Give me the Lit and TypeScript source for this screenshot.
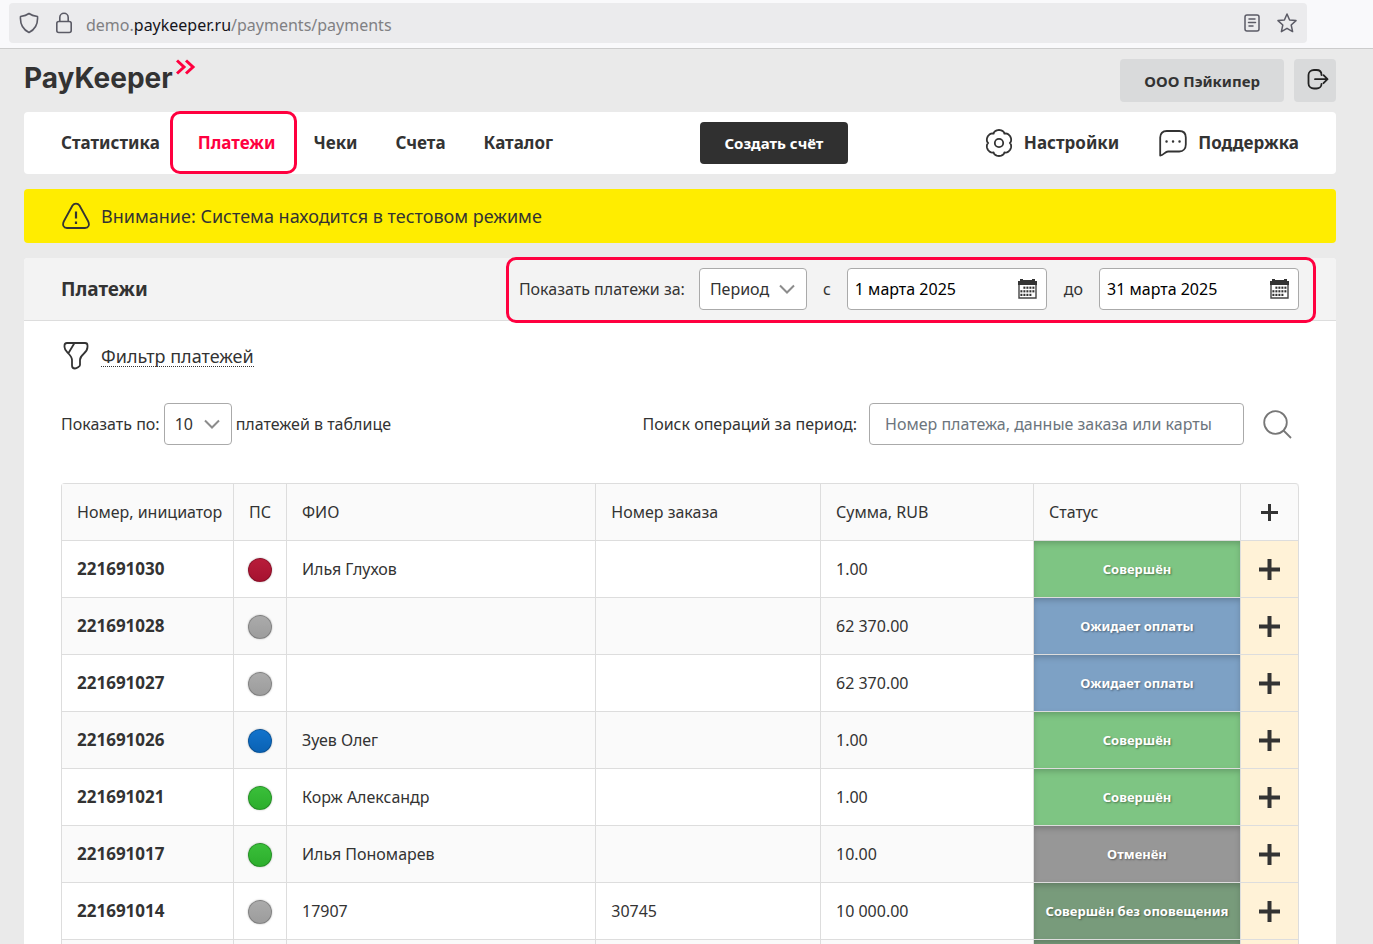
import { LitElement, html, css, svg, nothing } from "lit";
import { customElement } from "lit/decorators.js";
import { classMap } from "lit/directives/class-map.js";

type Dot = "red" | "gray" | "blue" | "green";
type Status = "done" | "wait" | "cancel" | "silent";

interface Payment {
  id: string;
  dot: Dot;
  name: string;
  order: string;
  sum: string;
  status: Status;
}

const STATUS_TEXT: Record<Status, string> = {
  done: "Совершён",
  wait: "Ожидает оплаты",
  cancel: "Отменён",
  silent: "Совершён без оповещения",
};

const PAYMENTS: Payment[] = [
  { id: "221691030", dot: "red", name: "Илья Глухов", order: "", sum: "1.00", status: "done" },
  { id: "221691028", dot: "gray", name: "", order: "", sum: "62 370.00", status: "wait" },
  { id: "221691027", dot: "gray", name: "", order: "", sum: "62 370.00", status: "wait" },
  { id: "221691026", dot: "blue", name: "Зуев Олег", order: "", sum: "1.00", status: "done" },
  { id: "221691021", dot: "green", name: "Корж Александр", order: "", sum: "1.00", status: "done" },
  { id: "221691017", dot: "green", name: "Илья Пономарев", order: "", sum: "10.00", status: "cancel" },
  { id: "221691014", dot: "gray", name: "17907", order: "30745", sum: "10 000.00", status: "silent" },
];

// Six-lobed outline of the settings gear, centred on 14,14.
const gearPath = (() => {
  const points: string[] = [];
  for (let deg = 0; deg < 360; deg += 5) {
    const t = (deg * Math.PI) / 180;
    const r = 10.8 + 2.2 * Math.pow(Math.abs(Math.cos(3 * (t - Math.PI / 2))), 0.6);
    points.push(`${(14 + r * Math.cos(t)).toFixed(2)} ${(14 + r * Math.sin(t)).toFixed(2)}`);
  }
  return `M${points.join("L")}Z`;
})();

const chevron = html`<svg class="chevron" width="16" height="10" viewBox="0 0 16 10" aria-hidden="true">
  <path d="M1 1.5l7 7 7-7" fill="none" stroke="#8c8c8c" stroke-width="2" />
</svg>`;

const calendarCells = [
  [6, 9, 12, 15],
  [3, 6, 9, 12, 15],
  [3, 6, 9, 12],
];

const calendar = html`<svg width="19" height="20" viewBox="0 0 19 20" aria-hidden="true">
  <path d="M1 4V19H18V4" fill="none" stroke="#444" stroke-width="1.4" />
  <path d="M0 2H2V0H5V1H14V0H17V2H19V6H0Z" fill="#333" />
  ${calendarCells.map((row, y) =>
    row.map((x) => svg`<rect x=${x - 0.6} y=${7.6 + y * 3.6} width="2" height="2.2" fill="#333"></rect>`)
  )}
</svg>`;

@customElement("app-root")
export class AppRoot extends LitElement {
  static styles = css`
    :host {
      display: flex;
      flex-direction: column;
      height: 100vh;
      overflow: hidden;
      background: #eaeaea;
      color: #333;
      font-family: "Noto Sans", "Open Sans", sans-serif;
      font-size: 16px;
      line-height: 24px;
    }
    * {
      box-sizing: border-box;
    }
    a {
      color: inherit;
      text-decoration: none;
    }
    button,
    input,
    select {
      font: inherit;
      color: inherit;
      margin: 0;
      padding: 0;
      border: 0;
      background: none;
    }
    svg {
      display: block;
      flex: none;
    }
    .browser {
      flex: none;
      height: 49px;
      padding: 3px 66px 5px 9px;
      background: #f9f9fb;
      border-bottom: 1px solid #ccc;
    }
    .address {
      display: flex;
      align-items: center;
      height: 40px;
      padding: 0 10px;
      border-radius: 4px;
      background: #ebebed;
    }
    .lock {
      margin: 0 13px 0 16px;
    }
    .url {
      flex: 1;
      display: flex;
      color: #808083;
      padding-top: 3px;
    }
    .url b {
      font-weight: 400;
      color: #15141a;
    }
    .star {
      margin-left: 17px;
    }
    .page {
      flex: 1;
      min-height: 0;
      overflow: auto;
      scrollbar-width: none;
      padding: 10px 37px 0 24px;
    }
    .top {
      display: flex;
      align-items: flex-start;
      gap: 10px;
      height: 53px;
    }
    .logo {
      flex: 1;
      display: flex;
      gap: 3px;
      font: 700 28px/38px "Inter", sans-serif;
      color: #333;
    }
    .gray-button {
      display: flex;
      align-items: center;
      justify-content: center;
      height: 43px;
      padding: 0 24px;
      border-radius: 4px;
      background: #d9dadb;
      font-weight: 700;
      font-size: 15px;
    }
    .exit {
      width: 42px;
      padding: 0 0 2px 5px;
    }
    .nav {
      display: flex;
      align-items: center;
      justify-content: space-between;
      height: 62px;
      padding: 0 37px;
      border-radius: 4px;
      background: #fff;
      font-size: 17px;
      font-weight: 700;
    }
    .links {
      display: flex;
      gap: 38px;
    }
    .link {
      position: relative;
    }
    .current {
      color: #ff003f;
    }
    .marked::after {
      content: "";
      position: absolute;
      inset: -20px -22px -19px -28px;
      border: 3px solid #ff003f;
      border-radius: 10px;
      pointer-events: none;
    }
    .create {
      width: 148px;
      height: 42px;
      margin-left: 10px;
      border-radius: 4px;
      background: #303030;
      color: #fff;
      font-size: 15px;
      font-weight: 700;
    }
    .tools {
      display: flex;
      gap: 40px;
    }
    .tool {
      display: flex;
      align-items: center;
      gap: 11px;
    }
    .alert {
      display: flex;
      align-items: center;
      gap: 11px;
      height: 54px;
      margin: 15px 0;
      padding: 0 38px;
      border-radius: 4px;
      background: #ffed00;
      font-size: 18px;
    }
    .panel {
      border-radius: 4px 4px 0 0;
      background: #fff;
    }
    .panel-head {
      display: flex;
      align-items: center;
      justify-content: space-between;
      height: 63px;
      padding: 0 37px;
      border-bottom: 1px solid #ddd;
      border-radius: 4px 4px 0 0;
      background: #f3f3f3;
    }
    h1 {
      margin: 0;
      font-size: 19px;
    }
    .period {
      position: relative;
      display: flex;
      align-items: center;
    }
    .period.marked::after {
      inset: -11px -17px -13px -13px;
    }
    .box {
      display: grid;
      align-items: center;
      height: 42px;
      border: 1px solid #aaa;
      border-radius: 4px;
      background: #fff;
    }
    .select select {
      grid-area: 1 / 1;
      width: 100%;
      height: 40px;
      padding: 0 10px;
      appearance: none;
    }
    .chevron {
      grid-area: 1 / 1;
      justify-self: end;
      margin-right: 11px;
      pointer-events: none;
    }
    .mode {
      width: 108px;
      margin: 0 16px 0 14px;
    }
    .date {
      grid-template-columns: 1fr auto;
      width: 200px;
      padding: 0 9px 0 7px;
      margin-left: 16px;
      color: #000;
    }
    .date input {
      min-width: 0;
      width: 100%;
    }
    .till {
      margin-left: 17px;
    }
    .body {
      padding: 20px 37px 0;
    }
    .filter {
      display: flex;
      align-items: center;
      gap: 12px;
      padding-left: 2px;
      font-size: 18px;
    }
    .filter span {
      border-bottom: 1px dotted #333;
      line-height: 20px;
    }
    .controls {
      display: flex;
      align-items: center;
      margin: 32px 0 38px;
    }
    .count {
      width: 68px;
      margin: 0 4px;
    }
    .search-label {
      margin-left: auto;
    }
    .search {
      width: 375px;
      margin: 0 19px 0 12px;
      padding: 0 15px;
    }
    .search::placeholder {
      color: #6c757d;
      opacity: 1;
    }
    .find {
      margin-right: 7px;
    }
    table {
      width: 100%;
      table-layout: fixed;
      border-collapse: separate;
      border-spacing: 0;
      border: solid #ddd;
      border-width: 1px 0 0 1px;
      border-radius: 4px 4px 0 0;
    }
    .col-id {
      width: 172px;
    }
    .col-ps {
      width: 53px;
    }
    .col-name {
      width: 25%;
    }
    .col-sum {
      width: 213px;
    }
    .col-status {
      width: 207px;
    }
    .col-more {
      width: 58px;
    }
    th,
    td {
      height: 57px;
      padding: 0 15px;
      border: solid #ddd;
      border-width: 0 1px 1px 0;
      text-align: left;
      font-weight: 400;
      white-space: nowrap;
    }
    thead th {
      background: #fafafa;
    }
    thead th:last-child {
      border-top-right-radius: 4px;
    }
    tbody tr:nth-child(even) {
      background: #fafafa;
    }
    tbody th {
      font-size: 17px;
      font-weight: 700;
    }
    .center,
    tbody .status {
      padding: 0;
      text-align: center;
    }
    .dot {
      display: block;
      width: 24px;
      height: 24px;
      margin: 2px auto 0;
      border: 1px solid rgba(0, 0, 0, 0.2);
      border-radius: 50%;
      box-shadow: 0 0 2px rgba(0, 0, 0, 0.3);
    }
    .red {
      background: linear-gradient(#b81c3a, #a61230);
    }
    .gray {
      background: linear-gradient(#ababab, #9c9c9c);
    }
    .blue {
      background: linear-gradient(#1273cc, #0a62b4);
    }
    .green {
      background: linear-gradient(#3abf3a, #2cae2c);
    }
    tbody .status {
      color: #fff;
      font-size: 13px;
      font-weight: 700;
      text-shadow: 1px 1px 2px rgba(0, 0, 0, 0.4);
      box-shadow: inset 0 3px 6px -1px rgba(0, 0, 0, 0.22);
    }
    .done {
      background: #7ec583;
    }
    .wait {
      background: #7da1c5;
    }
    .cancel {
      background: #979797;
    }
    .silent {
      background: #789b7b;
    }
    tbody .more {
      background: #fff2d7;
    }
    .more button {
      display: block;
      margin: 0 auto;
    }
  `;

  private plus(size: number, weight: number) {
    return html`<button type="button" aria-label="Подробнее">
      <svg width=${size} height=${size} viewBox="0 0 ${size} ${size}">
        <path d="M${size / 2} 0V${size}M0 ${size / 2}H${size}" stroke="#333" stroke-width=${weight} />
      </svg>
    </button>`;
  }

  private row(p: Payment) {
    return html`<tr>
      <th scope="row">${p.id}</th>
      <td class="center"><span class=${classMap({ dot: true, [p.dot]: true })}></span></td>
      <td>${p.name || nothing}</td>
      <td>${p.order || nothing}</td>
      <td>${p.sum}</td>
      <td class=${classMap({ status: true, [p.status]: true })}>${STATUS_TEXT[p.status]}</td>
      <td class="center more">${this.plus(21, 4)}</td>
    </tr>`;
  }

  render() {
    return html`
      <div class="browser">
        <div class="address">
          <svg width="20" height="22" viewBox="0 0 20 22" fill="none" stroke="#5b5b66" stroke-width="1.6" stroke-linejoin="round">
            <path d="M10 1.5C12 3 15 4 18.5 4.5C19 11 17 17 10 20.5C3 17 1 11 1.5 4.5C5 4 8 3 10 1.5Z" />
          </svg>
          <svg class="lock" width="18" height="22" viewBox="0 0 18 22" fill="none" stroke="#5b5b66" stroke-width="1.6">
            <rect x="1.8" y="9.5" width="14.4" height="11" rx="2" />
            <path d="M4.8 9.5V5.5a4.2 4.2 0 0 1 8.4 0V9.5" />
          </svg>
          <div class="url">demo.<b>paykeeper.ru</b>/payments/payments</div>
          <svg width="16" height="18" viewBox="0 0 16 18" fill="none" stroke="#5b5b66" stroke-width="1.5">
            <rect x="1" y="1" width="14" height="16" rx="2" />
            <path d="M5 5H11M4.5 8.500H11.500M5 12H9" stroke-linecap="round" />
          </svg>
          <svg class="star" width="20" height="20" viewBox="0 0 20 20" fill="none" stroke="#5b5b66" stroke-width="1.5" stroke-linejoin="round">
            <path d="M10 1L12.600 7L19 7.600L14.200 12L15.600 18.600L10 15.300L4.400 18.600L5.800 12L1 7.600L7.400 7Z" />
          </svg>
        </div>
      </div>
      <div class="page">
        <header class="top">
          <a class="logo" href="#">
            PayKeeper
            <svg width="20" height="16" viewBox="0 0 20 16" fill="none" stroke="#ff003f" stroke-width="3">
              <path d="M1 1.500L8 8L1 14.500M10 1.500L17 8L10 14.500" />
            </svg>
          </a>
          <button class="gray-button" type="button">ООО Пэйкипер</button>
          <button class="gray-button exit" type="button" aria-label="Выйти">
            <svg width="24" height="25" viewBox="0 0 24 25" fill="none" stroke="#222" stroke-width="1.8" stroke-linecap="round" stroke-linejoin="round">
              <path d="M15.500 8C15.500 5 13.500 3 10.500 3H8C5 3 2.500 5 2.500 8V16.500C2.500 19.500 5 21.500 8 21.500H10.500C13.500 21.500 15.500 19.500 15.500 17M9 12.200H21.500M17.500 8.200L21.500 12.200L17.500 16.200" />
            </svg>
          </button>
        </header>
        <nav class="nav">
          <div class="links">
            <a class="link" href="#">Статистика</a>
            <a class="link current marked" href="#" aria-current="page">Платежи</a>
            <a class="link" href="#">Чеки</a>
            <a class="link" href="#">Счета</a>
            <a class="link" href="#">Каталог</a>
          </div>
          <button class="create" type="button">Создать счёт</button>
          <div class="tools">
            <a class="tool" href="#">
              <svg width="28" height="28" viewBox="0 0 28 28" fill="none" stroke="#333" stroke-width="1.8" stroke-linejoin="round">
                <path d=${gearPath} />
                <circle cx="14" cy="14" r="4.200" />
              </svg>
              Настройки
            </a>
            <a class="tool" href="#">
              <svg width="28" height="28" viewBox="0 0 28 28" fill="none" stroke="#333" stroke-width="1.8" stroke-linejoin="round">
                <path d="M1.200 26.500V8.500C1.200 4.500 3.700 2 7.700 2H20.300C24.300 2 26.800 4.500 26.800 8.500V15.500C26.800 19.500 24.300 22.500 20.300 22.500H9C6 22.500 4.500 26.500 1.200 26.500Z" />
                <path d="M7.500 12.500H7.600M14 12.500H14.100M20.500 12.500H20.600" stroke-width="2.400" stroke-linecap="round" />
              </svg>
              Поддержка
            </a>
          </div>
        </nav>
        <div class="alert" role="status">
          <svg width="28" height="28" viewBox="0 0 28 28" fill="none" stroke="#333" stroke-width="1.8" stroke-linejoin="round">
            <path d="M10.500 3.500C12.200 .9 15.800 .9 17.500 3.500L26 19C28 23 26.500 26 23 26H5C1.500 26 0 23 2 19Z" />
            <path d="M14 9.500V16.500M14 19.500V22" stroke-width="2.200" />
          </svg>
          Внимание: Система находится в тестовом режиме
        </div>
        <main class="panel">
          <div class="panel-head">
            <h1>Платежи</h1>
            <form class="period marked">
              <label for="mode">Показать платежи за:</label>
              <div class="box select mode">
                <select id="mode">
                  <option>Период</option>
                </select>
                ${chevron}
              </div>
              <label for="from">с</label>
              <div class="box date">
                <input id="from" type="text" value="1 марта 2025" />
                <button type="button" aria-label="Выбрать дату начала">${calendar}</button>
              </div>
              <label class="till" for="till">до</label>
              <div class="box date">
                <input id="till" type="text" value="31 марта 2025" />
                <button type="button" aria-label="Выбрать дату окончания">${calendar}</button>
              </div>
            </form>
          </div>
          <div class="body">
            <button class="filter" type="button">
              <svg width="26" height="30" viewBox="0 0 26 30" fill="none" stroke="#333" stroke-width="1.8" stroke-linejoin="round">
                <path d="M4 2H22C23.800 2 24.500 3 24.500 4.500V6C24.500 9 22.800 11 20.500 13C18 15.200 17 16.500 17 19V24C17 25.500 13.500 27.500 12 27.500C10.500 27.500 9 26.500 9 24.500V19C9 16.500 8 15.200 5.500 12.500C3 10 1.500 9 1.500 6V4.500C1.500 3 2.200 2 4 2ZM11.500 2L5.500 12" />
              </svg>
              <span>Фильтр платежей</span>
            </button>
            <div class="controls">
              <label for="count">Показать по:</label>
              <div class="box select count">
                <select id="count">
                  <option>10</option>
                </select>
                ${chevron}
              </div>
              <span>платежей в таблице</span>
              <label class="search-label" for="search">Поиск операций за период:</label>
              <input class="box search" id="search" type="text" placeholder="Номер платежа, данные заказа или карты" />
              <button class="find" type="button" aria-label="Найти">
                <svg width="29" height="29" viewBox="0 0 29 29" fill="none" stroke="#777" stroke-width="1.800">
                  <circle cx="12.500" cy="12.500" r="11.300" />
                  <path d="M20.500 20.500L28 28" />
                </svg>
              </button>
            </div>
            <table>
              <colgroup>
                <col class="col-id" />
                <col class="col-ps" />
                <col class="col-name" />
                <col />
                <col class="col-sum" />
                <col class="col-status" />
                <col class="col-more" />
              </colgroup>
              <thead>
                <tr>
                  <th scope="col">Номер, инициатор</th>
                  <th scope="col" class="center">ПС</th>
                  <th scope="col">ФИО</th>
                  <th scope="col">Номер заказа</th>
                  <th scope="col">Сумма, RUB</th>
                  <th scope="col">Статус</th>
                  <th scope="col" class="center more">${this.plus(17, 3)}</th>
                </tr>
              </thead>
              <tbody>
                ${PAYMENTS.map((p) => this.row(p))}
                <tr>
                  <th></th>
                  <td></td>
                  <td></td>
                  <td></td>
                  <td></td>
                  <td class="status silent"></td>
                  <td class="more"></td>
                </tr>
              </tbody>
            </table>
          </div>
        </main>
      </div>
    `;
  }
}
